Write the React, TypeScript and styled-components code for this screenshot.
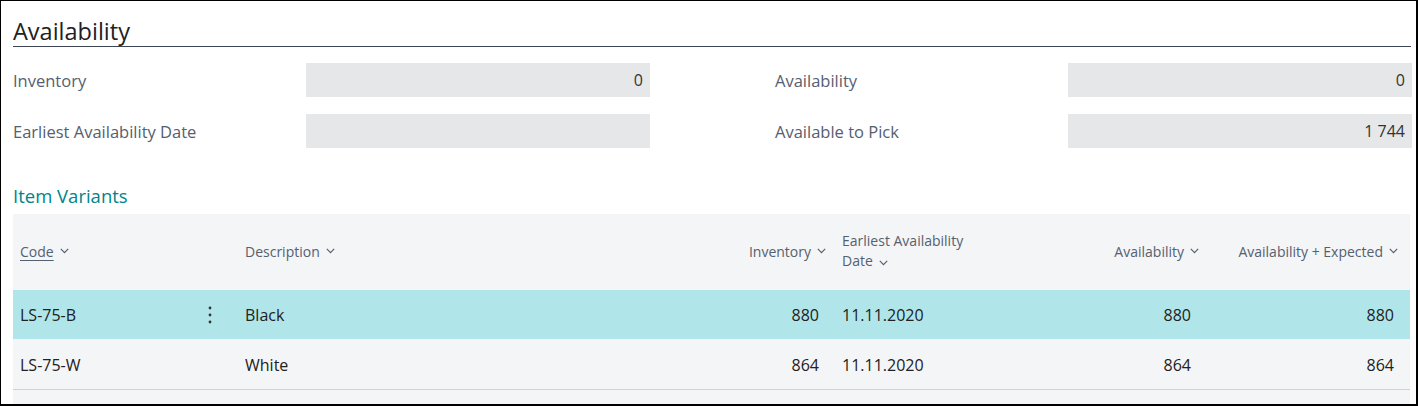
import styled, { createGlobalStyle } from 'styled-components';

const GlobalStyle = createGlobalStyle`
  html, body {
    margin: 0;
    padding: 0;
    background: #ffffff;
  }
  body {
    font-family: "Open Sans", "Noto Sans", sans-serif;
  }
`;

type Variant = {
  code: string;
  description: string;
  inventory: string;
  date: string;
  availability: string;
  expected: string;
};

const variants: Variant[] = [
  { code: 'LS-75-B', description: 'Black', inventory: '880', date: '11.11.2020', availability: '880', expected: '880' },
  { code: 'LS-75-W', description: 'White', inventory: '864', date: '11.11.2020', availability: '864', expected: '864' },
];

const Chevron = () => (
  <ChevronIcon width="9" height="6" viewBox="0 0 9 6">
    <path d="M0.8 0.9 L4.5 4.6 L8.2 0.9" fill="none" stroke="currentColor" strokeWidth="1.2" />
  </ChevronIcon>
);

const MoreIcon = () => (
  <svg width="4" height="18" viewBox="0 0 4 18">
    <circle cx="2" cy="2" r="1.4" fill="#333" />
    <circle cx="2" cy="9" r="1.4" fill="#333" />
    <circle cx="2" cy="16" r="1.4" fill="#333" />
  </svg>
);

const App = () => {
  return (
    <Frame>
      <GlobalStyle />
      <Title>Availability</Title>
      <Fields>
        <FieldColumn>
          <Field>
            <Label>Inventory</Label>
            <ValueBox>0</ValueBox>
          </Field>
          <Field>
            <Label>Earliest Availability Date</Label>
            <ValueBox />
          </Field>
        </FieldColumn>
        <FieldColumn>
          <Field>
            <Label>Availability</Label>
            <ValueBox>0</ValueBox>
          </Field>
          <Field>
            <Label>Available to Pick</Label>
            <ValueBox>1 744</ValueBox>
          </Field>
        </FieldColumn>
      </Fields>
      <PartTitle>Item Variants</PartTitle>
      <Grid>
        <HeaderRow>
          <HeadCell $w={169} $pl={7}>
            <Underlined>Code</Underlined>
            <Chevron />
          </HeadCell>
          <HeadCell $w={55} />
          <HeadCell $w={498} $pl={8}>
            Description
            <Chevron />
          </HeadCell>
          <HeadCell $w={99} $align="right" $pr={8}>
            Inventory
            <Chevron />
          </HeadCell>
          <HeadCell $w={166} $pl={8}>
            <Wrapped>
              Earliest Availability Date
              <Chevron />
            </Wrapped>
          </HeadCell>
          <HeadCell $w={207} $align="right" $pr={8}>
            Availability
            <Chevron />
          </HeadCell>
          <HeadCell $w={203} $align="right" $pr={12}>
            Availability + Expected
            <Chevron />
          </HeadCell>
        </HeaderRow>
        {variants.map((v, i) => (
          <Row key={v.code} $selected={i === 0}>
            <Cell $w={169} $pl={7}>{v.code}</Cell>
            <Cell $w={55} $align="center">{i === 0 && <MoreIcon />}</Cell>
            <Cell $w={498} $pl={8}>{v.description}</Cell>
            <Cell $w={99} $align="right" $pr={15}>{v.inventory}</Cell>
            <Cell $w={166} $pl={8}>{v.date}</Cell>
            <Cell $w={207} $align="right" $pr={16}>{v.availability}</Cell>
            <Cell $w={203} $align="right" $pr={16}>{v.expected}</Cell>
          </Row>
        ))}
        <GridFoot />
      </Grid>
    </Frame>
  );
};

export default App;

const Frame = styled.div`
  width: 1418px;
  height: 406px;
  box-sizing: border-box;
  border: 1px solid #000;
  border-right-width: 2px;
  border-bottom-width: 2px;
  padding: 15px 5px 0 12px;
  overflow: hidden;
`;

const Title = styled.div`
  font-size: 23.5px;
  line-height: 30px;
  color: #212121;
  border-bottom: 1px solid #3a4453;
`;

const Fields = styled.div`
  display: grid;
  grid-template-columns: 637px 637px;
  column-gap: 125px;
  margin-top: 16px;
`;

const FieldColumn = styled.div`
  display: flex;
  flex-direction: column;
  gap: 17px;
`;

const Field = styled.div`
  display: grid;
  grid-template-columns: 293px 344px;
  align-items: center;
`;

const Label = styled.div`
  font-size: 16.5px;
  color: #55606f;
`;

const ValueBox = styled.div`
  height: 34px;
  background: #e6e7e8;
  display: flex;
  align-items: center;
  justify-content: flex-end;
  padding: 0 7px;
  font-size: 16px;
  color: #333;
`;

const PartTitle = styled.div`
  margin-top: 36px;
  font-size: 18.5px;
  line-height: 24px;
  color: #008489;
  height: 30px;
`;

const Grid = styled.div`
  background: #f4f5f7;
  width: 1397px;
  height: 190px;
  display: flex;
  flex-direction: column;
`;

const HeaderRow = styled.div`
  display: flex;
  height: 76px;
  align-items: center;
`;

type CellProps = { $w: number; $pl?: number; $pr?: number; $align?: 'left' | 'right' | 'center' };

const HeadCell = styled.div<CellProps>`
  flex: 0 0 ${(p) => p.$w}px;
  box-sizing: border-box;
  padding-left: ${(p) => p.$pl ?? 0}px;
  padding-right: ${(p) => p.$pr ?? 0}px;
  display: flex;
  align-items: center;
  justify-content: ${(p) => (p.$align === 'right' ? 'flex-end' : p.$align === 'center' ? 'center' : 'flex-start')};
  font-size: 14px;
  color: #55606f;
  white-space: nowrap;
  margin-top: -2px;
`;

const Wrapped = styled.div`
  white-space: normal;
  width: 132px;
  line-height: 20px;
`;

const Underlined = styled.span`
  text-decoration: underline;
  text-underline-offset: 3px;
`;

const ChevronIcon = styled.svg`
  margin-left: 6px;
  color: #55606f;
  flex-shrink: 0;
`;

const Row = styled.div<{ $selected: boolean }>`
  display: flex;
  height: 49px;
  align-items: center;
  background: ${(p) => (p.$selected ? '#b0e6ea' : 'transparent')};
  border-bottom: 1px solid ${(p) => (p.$selected ? '#f4f5f7' : '#cfd1d4')};
`;

const Cell = styled.div<CellProps>`
  flex: 0 0 ${(p) => p.$w}px;
  box-sizing: border-box;
  padding-left: ${(p) => p.$pl ?? 0}px;
  padding-right: ${(p) => p.$pr ?? 0}px;
  display: flex;
  align-items: center;
  justify-content: ${(p) => (p.$align === 'right' ? 'flex-end' : p.$align === 'center' ? 'center' : 'flex-start')};
  font-size: 16px;
  color: #212121;
  white-space: nowrap;
`;

const GridFoot = styled.div`
  flex: 1;
`;
